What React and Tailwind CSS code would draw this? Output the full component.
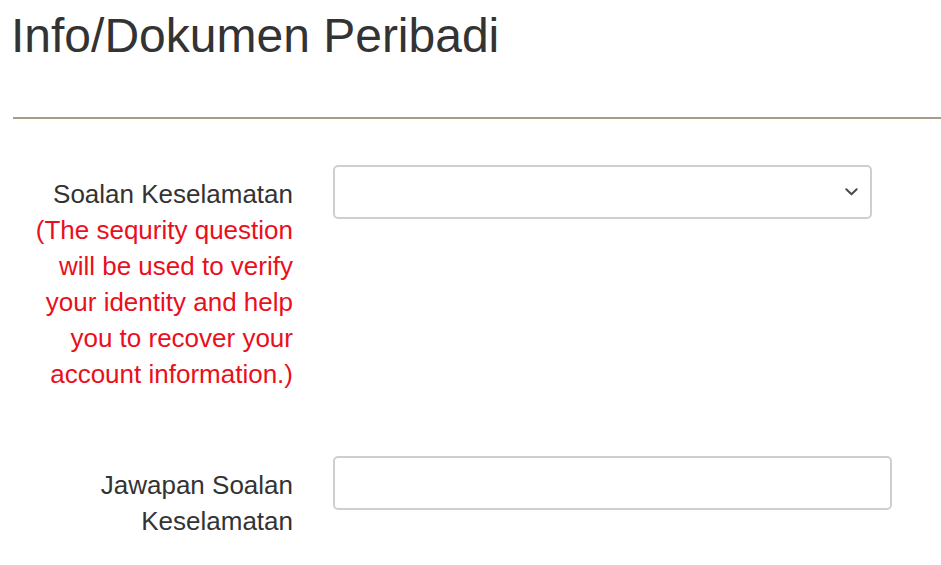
import React from 'react';

const ChevronDown = () => (
    <svg width="13" height="8" viewBox="0 0 13 8" fill="none">
        <path d="M1.3 1.3 L6.5 6.3 L11.7 1.3" stroke="#4a4a4a" strokeWidth="2" strokeLinecap="round" strokeLinejoin="round" />
    </svg>
);

const App = () => {
    return (
        <div className="w-[941px] h-[565px] bg-white overflow-hidden text-[#333]" style={{ fontFamily: '"Liberation Sans", Arial, sans-serif' }}>
            {/* header */}
            <h1 className="pt-[8px] pl-[11px] text-[48px] leading-[56px] font-normal">Info/Dokumen Peribadi</h1>
            <div className="mt-[53px] ml-[13px] h-[2px] bg-[#aa9a86]" />

            {/* form */}
            <div className="mt-[46px] flex flex-col gap-[64px]">
                <div className="flex items-start">
                    <div className="w-[293px] pt-[11px] text-right text-[26px] leading-[36px]">
                        <div>Soalan Keselamatan</div>
                        <div className="text-[#ea0f1c]">
                            (The sequrity question<br />
                            will be used to verify<br />
                            your identity and help<br />
                            you to recover your<br />
                            account information.)
                        </div>
                    </div>
                    <div className="ml-[40px] w-[539px] h-[54px] rounded-[5px] border-2 border-[#cfcfcf] bg-white flex items-center justify-end pr-[12px]">
                        <ChevronDown />
                    </div>
                </div>

                <div className="flex items-start">
                    <div className="w-[293px] pt-[11px] text-right text-[26px] leading-[36px]">
                        Jawapan Soalan<br />
                        Keselamatan
                    </div>
                    <input
                        type="text"
                        className="ml-[40px] w-[559px] h-[54px] rounded-[5px] border-2 border-[#cfcfcf] bg-white outline-none px-3 text-[26px]"
                    />
                </div>
            </div>
        </div>
    );
};

export default App;
